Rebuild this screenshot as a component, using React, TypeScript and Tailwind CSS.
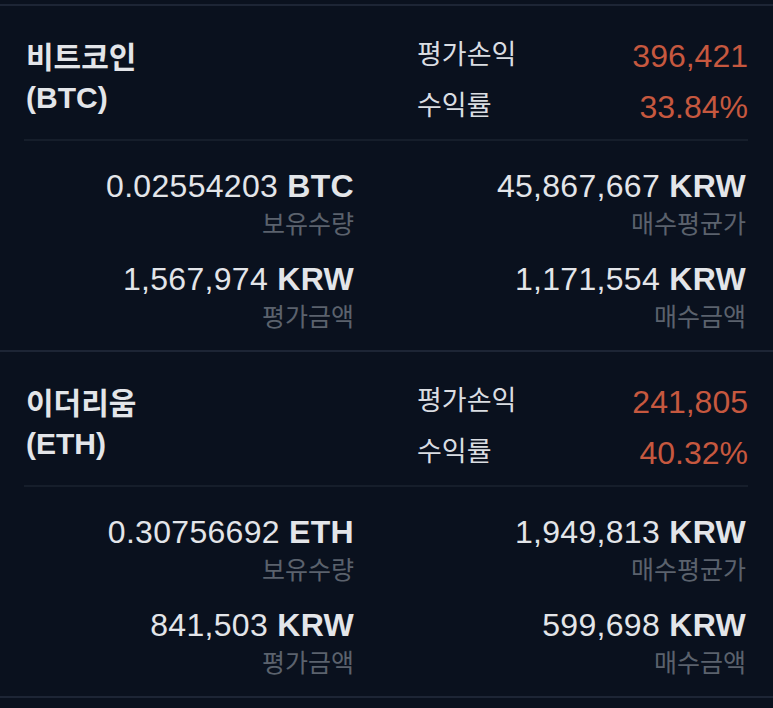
const holdings = [
  {
    name: '비트코인',
    symbol: 'BTC',
    pnl: '396,421',
    rate: '33.84%',
    qty: '0.02554203',
    avg: '45,867,667',
    value: '1,567,974',
    cost: '1,171,554',
  },
  {
    name: '이더리움',
    symbol: 'ETH',
    pnl: '241,805',
    rate: '40.32%',
    qty: '0.30756692',
    avg: '1,949,813',
    value: '841,503',
    cost: '599,698',
  },
]

const font = "font-['Liberation_Sans','Noto_Sans_CJK_KR',sans-serif]"

function Stat({ amount, unit, label }: { amount: string; unit: string; label: string }) {
  return (
    <div className="flex flex-col items-end">
      <div className="text-[32px] leading-[39px] tracking-[0.3px] text-[#e3e5e9]">
        {amount} <span className="font-bold">{unit}</span>
      </div>
      <div className="text-[25px] leading-[36px] text-[#5b626d]">{label}</div>
    </div>
  )
}

export default function App() {
  return (
    <div className={`min-h-[708px] bg-[#0a111e] pt-1 ${font}`}>
      {holdings.map((h) => (
        <section key={h.symbol} className="border-t-2 border-[#1d2535]">
          {/* Header */}
          <div className="ml-6 mr-[25px] grid grid-cols-2 gap-x-[62px] border-b-2 border-[#161e2b] pt-6 pb-[7px]">
            <div className="pt-2 pl-[2px] text-[30px] font-bold leading-[40px] text-[#e3e5e9]">
              <div>{h.name}</div>
              <div>({h.symbol})</div>
            </div>
            <div>
              <div className="flex h-[51px] items-center justify-between">
                <span className="text-[27px] text-[#dadde2]">평가손익</span>
                <span className="text-[32px] text-[#c6583f]">{h.pnl}</span>
              </div>
              <div className="flex h-[51px] items-center justify-between">
                <span className="text-[27px] text-[#dadde2]">수익률</span>
                <span className="text-[32px] text-[#c6583f]">{h.rate}</span>
              </div>
            </div>
          </div>

          {/* Details */}
          <div className="ml-6 mr-[27px] grid grid-cols-2 gap-x-[62px] gap-y-[18px] pt-[26px] pb-[15px]">
            <Stat amount={h.qty} unit={h.symbol} label="보유수량" />
            <Stat amount={h.avg} unit="KRW" label="매수평균가" />
            <Stat amount={h.value} unit="KRW" label="평가금액" />
            <Stat amount={h.cost} unit="KRW" label="매수금액" />
          </div>
        </section>
      ))}
      <div className="border-t-2 border-[#1d2535]" />
    </div>
  )
}
